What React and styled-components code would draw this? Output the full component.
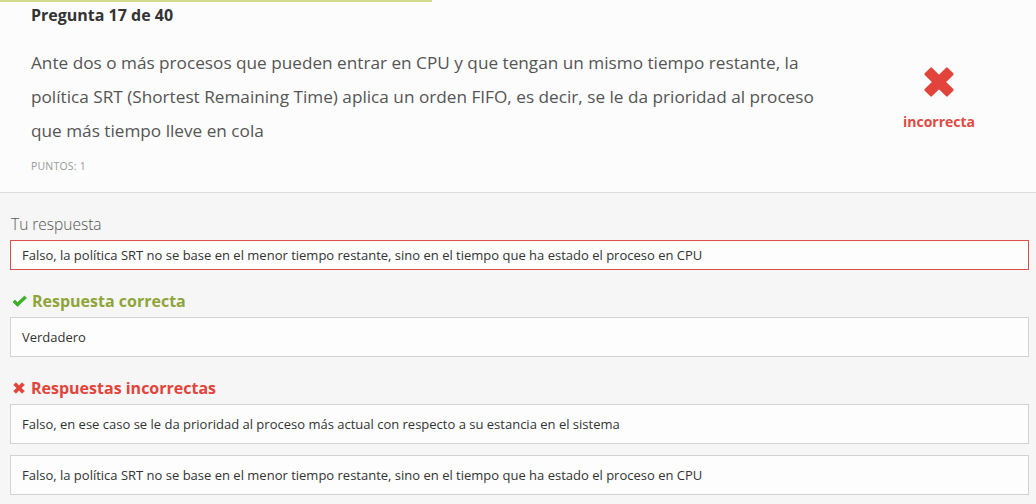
import React from "react";
import styled, { createGlobalStyle } from "styled-components";

const GlobalStyle = createGlobalStyle`
  html, body {
    margin: 0;
    padding: 0;
    background: #f6f6f6;
    font-family: "Open Sans", "Liberation Sans", sans-serif;
  }
`;

const incorrectAnswers = [
  "Falso, en ese caso se le da prioridad al proceso más actual con respecto a su estancia en el sistema",
  "Falso, la política SRT no se base en el menor tiempo restante, sino en el tiempo que ha estado el proceso en CPU",
];

function CrossIcon({ size = 14 }) {
  return (
    <svg width={size} height={size} viewBox="0 0 32 32">
      <path
        d="M4 9 L9 4 L16 11 L23 4 L28 9 L21 16 L28 23 L23 28 L16 21 L9 28 L4 23 L11 16 Z"
        fill="#e2443b"
        stroke="#e2443b"
        strokeWidth="2"
        strokeLinejoin="round"
      />
    </svg>
  );
}

function CheckIcon() {
  return (
    <svg width="15" height="13" viewBox="0 0 30 26">
      <path
        d="M2 14 L6 10 L11 15 L25 2 L29 6 L11 23 Z"
        fill="#3fae2a"
        stroke="#3fae2a"
        strokeWidth="1.5"
        strokeLinejoin="round"
      />
    </svg>
  );
}

export default function App() {
  return (
    <Page>
      <GlobalStyle />
      <QuestionCard>
        <Progress />
        <QuestionTitle>Pregunta 17 de 40</QuestionTitle>
        <QuestionRow>
          <QuestionBody>
            <QuestionText>
              Ante dos o más procesos que pueden entrar en CPU y que tengan un
              mismo tiempo restante, la política SRT (Shortest Remaining Time)
              aplica un orden FIFO, es decir, se le da prioridad al proceso que
              más tiempo lleve en cola
            </QuestionText>
            <Points>PUNTOS: 1</Points>
          </QuestionBody>
          <Verdict>
            <CrossIcon size={36} />
            <VerdictLabel>incorrecta</VerdictLabel>
          </Verdict>
        </QuestionRow>
      </QuestionCard>

      <Answers>
        <Section>
          <YourLabel>Tu respuesta</YourLabel>
          <AnswerBox $wrong $compact>
            Falso, la política SRT no se base en el menor tiempo restante, sino
            en el tiempo que ha estado el proceso en CPU
          </AnswerBox>
        </Section>

        <Section>
          <Heading $color="#8ea53a">
            <CheckIcon />
            Respuesta correcta
          </Heading>
          <AnswerBox>Verdadero</AnswerBox>
        </Section>

        <Section>
          <Heading $color="#e2443b">
            <CrossIcon />
            Respuestas incorrectas
          </Heading>
          <List>
            {incorrectAnswers.map((a) => (
              <AnswerBox key={a}>{a}</AnswerBox>
            ))}
          </List>
        </Section>
      </Answers>
    </Page>
  );
}

const Page = styled.div`
  width: 1036px;
  height: 504px;
  overflow: hidden;
  background: #f6f6f6;
`;

const QuestionCard = styled.div`
  position: relative;
  background: #fcfcfc;
  border-bottom: 1px solid #dcdcdc;
  height: 193px;
  box-sizing: border-box;
  padding: 4px 0 0 31px;
`;

const Progress = styled.div`
  position: absolute;
  left: 0;
  top: 0;
  width: 432px;
  height: 2px;
  background: #d3dc8c;
`;

const QuestionTitle = styled.div`
  font-size: 16px;
  font-weight: 700;
  color: #333;
  line-height: 22px;
`;

const QuestionRow = styled.div`
  display: flex;
  align-items: flex-start;
`;

const QuestionBody = styled.div`
  width: 800px;
  padding-top: 20px;
`;

const QuestionText = styled.div`
  font-size: 17.2px;
  line-height: 34px;
  color: #555;
`;

const Points = styled.div`
  margin-top: 11px;
  font-size: 10.5px;
  color: #999;
  letter-spacing: 0.2px;
`;

const Verdict = styled.div`
  width: 140px;
  margin-left: 38px;
  padding-top: 38px;
  display: flex;
  flex-direction: column;
  align-items: center;
`;

const VerdictLabel = styled.div`
  margin-top: 12px;
  font-size: 14px;
  font-weight: 700;
  color: #df4a44;
`;

const Answers = styled.div`
  padding: 20px 7px 0 10px;
  display: flex;
  flex-direction: column;
  gap: 20px;
`;

const Section = styled.div`
  display: flex;
  flex-direction: column;
`;

const YourLabel = styled.div`
  font-size: 15.5px;
  font-weight: 300;
  line-height: 22px;
  color: #555;
  padding-left: 1px;
  margin-bottom: 5px;
`;

const Heading = styled.div`
  display: flex;
  align-items: center;
  gap: 5px;
  font-size: 16px;
  font-weight: 700;
  line-height: 22px;
  color: ${(p) => p.$color};
  padding-left: 2px;
  margin-bottom: 5px;
`;

const List = styled.div`
  display: flex;
  flex-direction: column;
  gap: 11px;
`;

const AnswerBox = styled.div`
  background: #fdfdfd;
  border: 1px solid ${(p) => (p.$wrong ? "#d6514c" : "#d2d2d2")};
  height: ${(p) => (p.$compact ? "30px" : "40px")};
  box-sizing: border-box;
  display: flex;
  align-items: center;
  padding: 0 11px;
  font-size: 13px;
  color: #333;
`;
